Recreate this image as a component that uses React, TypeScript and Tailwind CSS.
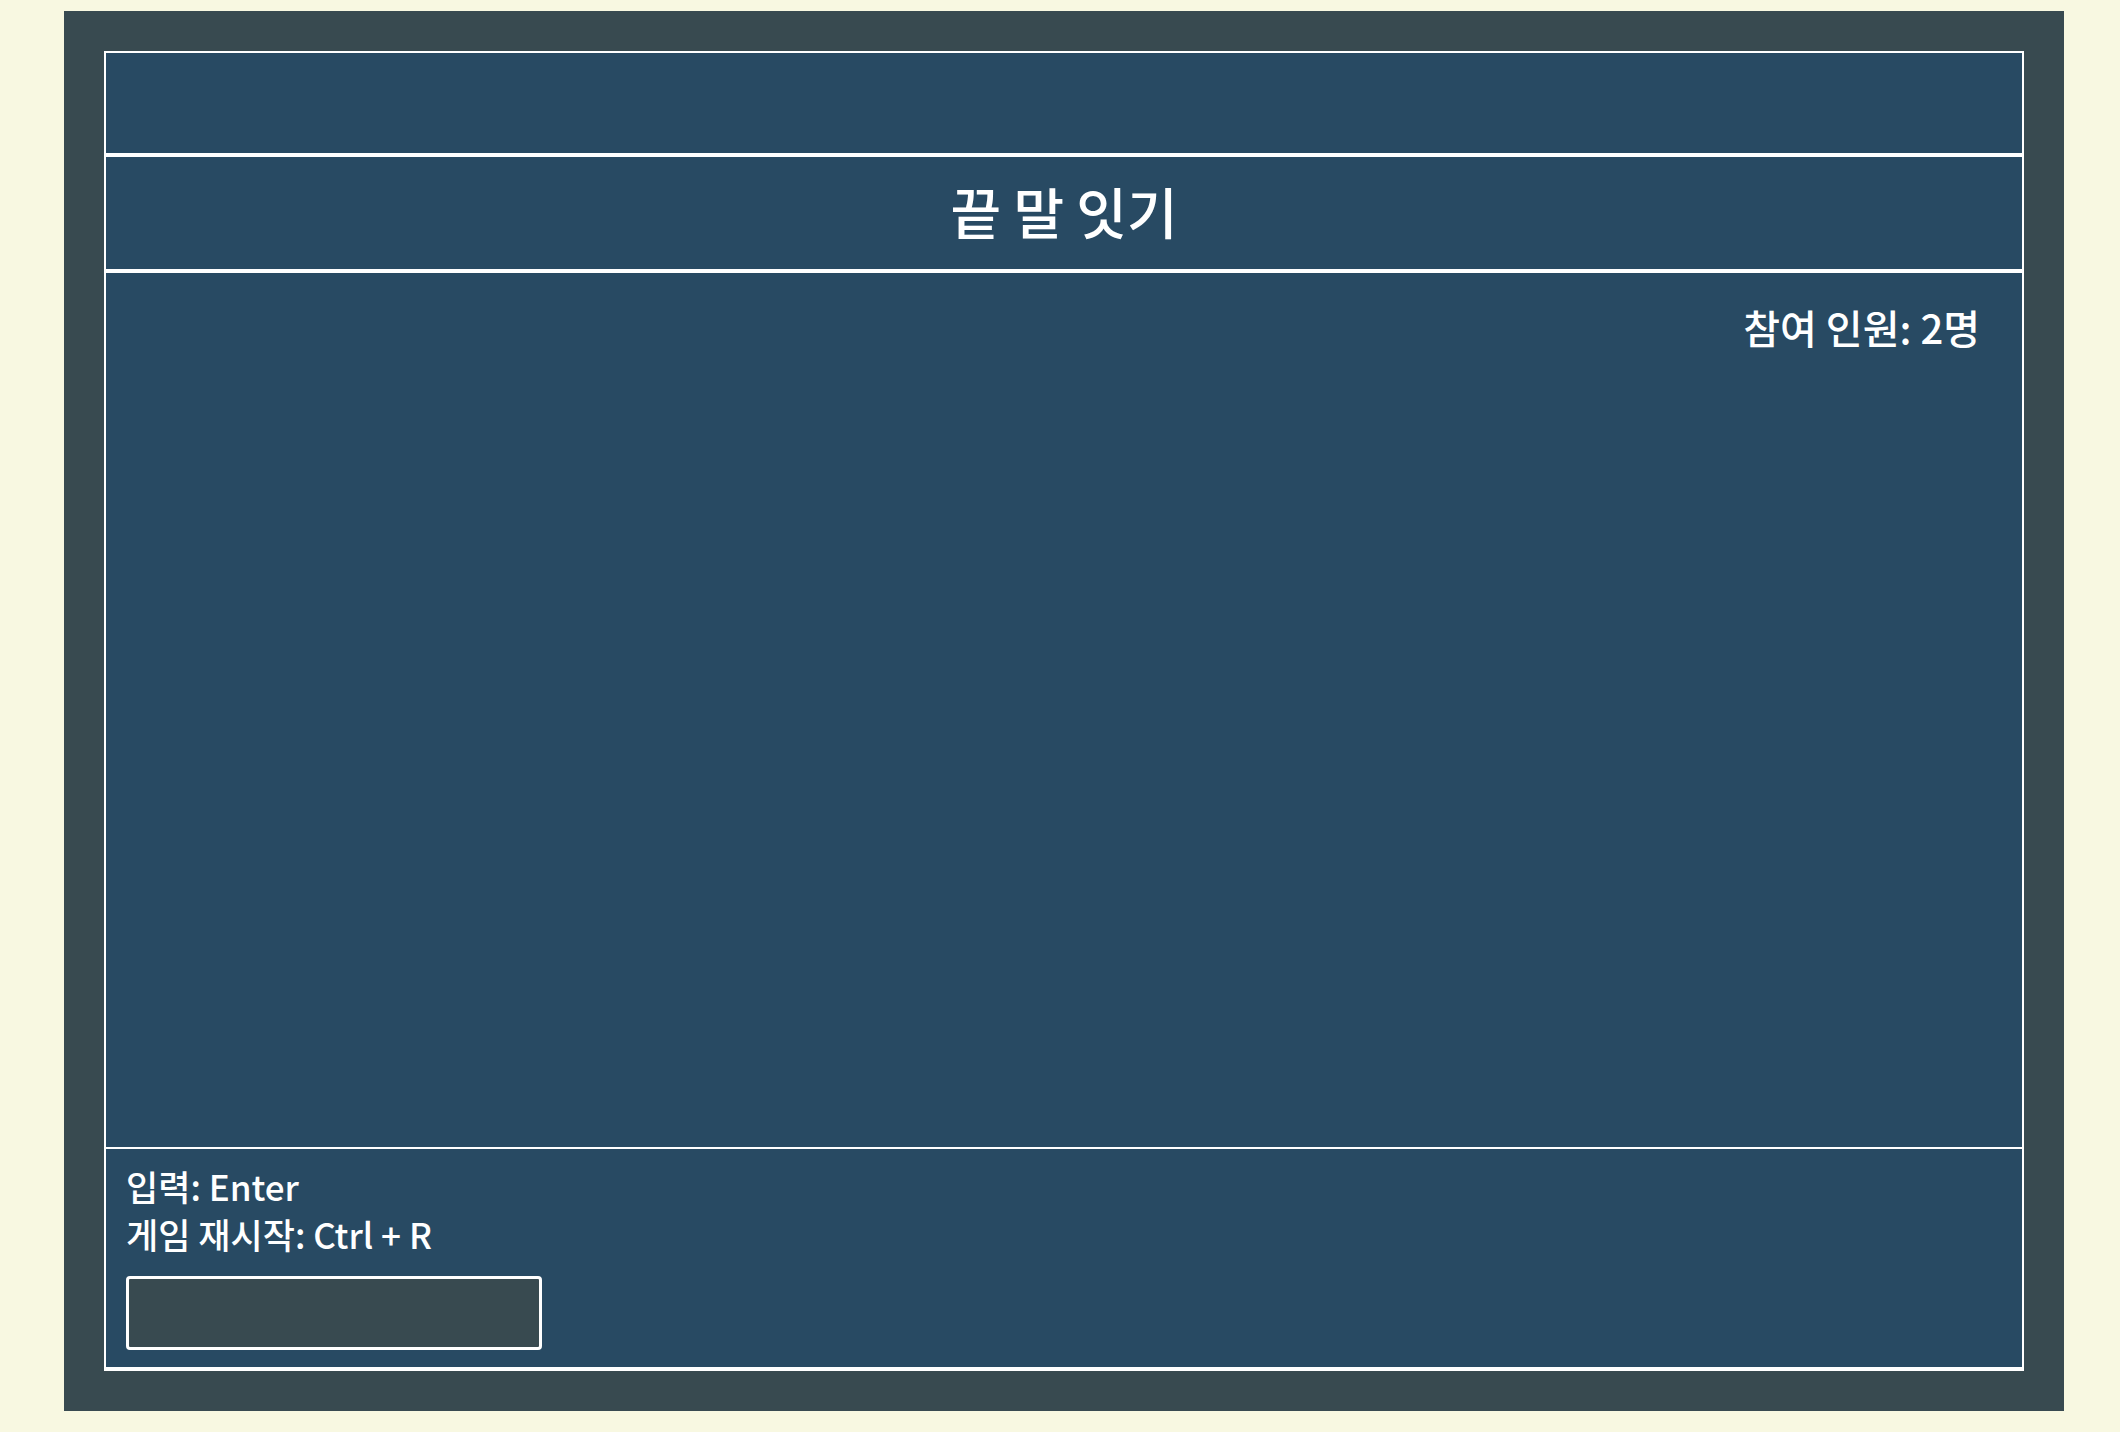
import React, { useState } from 'react';

const FONT = "font-['Noto_Sans_CJK_KR','Noto_Sans',sans-serif]";

export default function App() {
  const [word, setWord] = useState('');
  const players = 2;

  return (
    <div className={`min-h-screen bg-[#f8f8e1] pt-[11px] pl-[64px] ${FONT}`}>
      <div className="w-[2000px] h-[1400px] bg-[#384a50] p-[40px]">
        <div className="h-full flex flex-col bg-[#284a63] border-2 border-b-[4px] border-white text-white font-medium">
          {/* header */}
          <div className="h-[104px] shrink-0 border-b-4 border-white" />

          {/* title */}
          <div className="h-[116px] shrink-0 border-b-4 border-white flex items-center justify-center">
            <h1 className="text-[55px] leading-none -mt-[6px]">끝 말 잇기</h1>
          </div>

          {/* game area */}
          <div className="flex-1 border-b-2 border-white pt-[27px] pr-[42px] flex flex-col items-end">
            <p className="text-[40px] leading-[54px]">참여 인원: {players}명</p>
          </div>

          {/* footer */}
          <div className="shrink-0 pt-[13px] pb-[17px] px-[20px]">
            <p className="text-[35px] leading-[48px]">입력: Enter</p>
            <p className="text-[35px] leading-[48px]">게임 재시작: Ctrl + R</p>
            <input
              value={word}
              onChange={(e) => setWord(e.target.value)}
              className="mt-[18px] block w-[416px] h-[74px] bg-[#384a50] border-[3px] border-white rounded-[4px] px-3 text-[28px] text-white outline-none"
            />
          </div>
        </div>
      </div>
    </div>
  );
}
